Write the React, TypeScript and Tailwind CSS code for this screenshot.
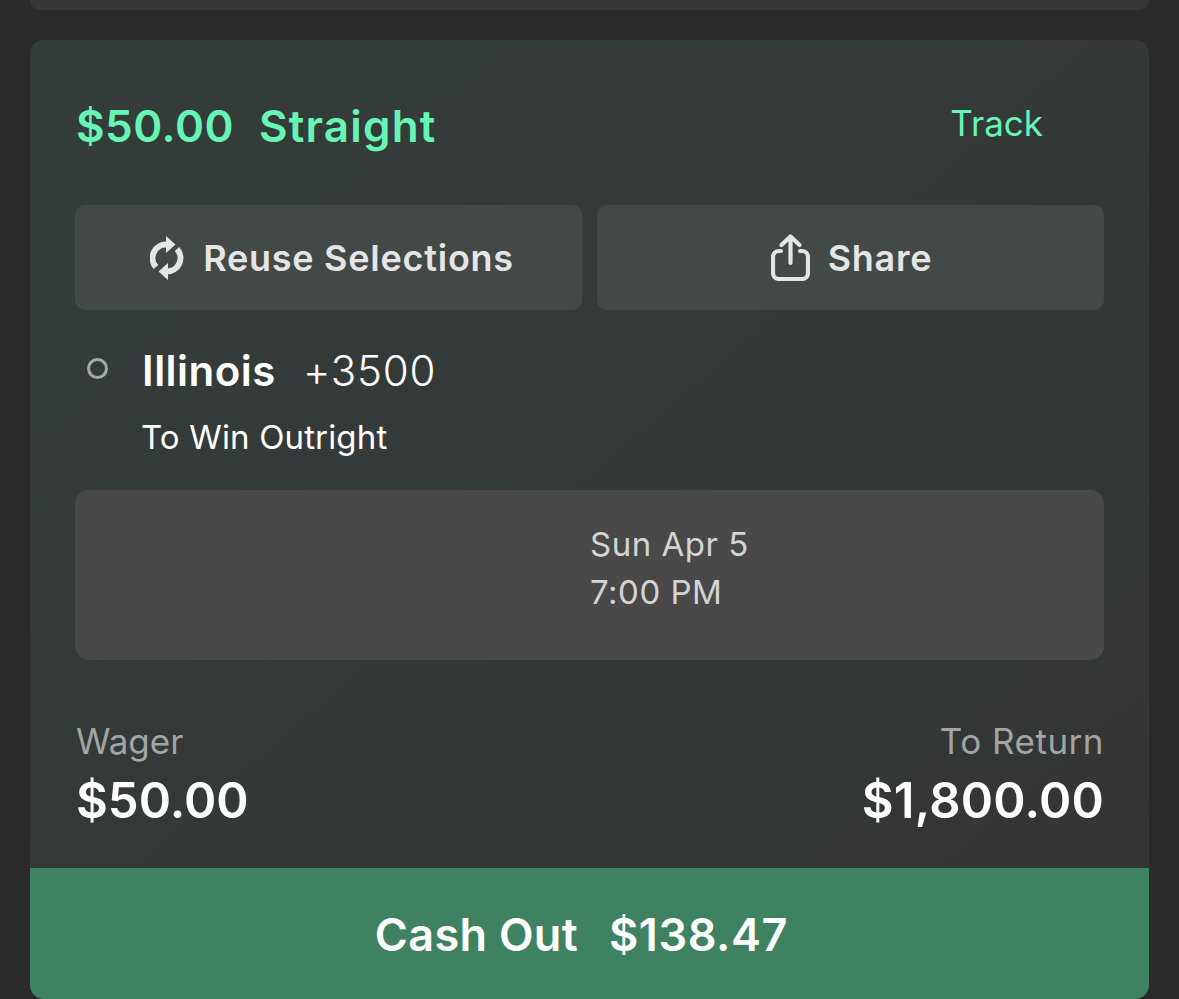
// Refresh glyph: two curved arrows chasing each other
function ReuseIcon() {
  return (
    <svg width="34" height="44" viewBox="0 0 34 44" fill="none" className="text-[#e5e5e5]">
      <path d="M6 31 A13.5 13.5 0 0 1 17 8.5" stroke="currentColor" strokeWidth="6" />
      <path d="M16 0 L25.5 8.5 L16 17 Z" fill="currentColor" />
      <path d="M27 13 A13.5 13.5 0 0 1 17 35.5" stroke="currentColor" strokeWidth="6" />
      <path d="M18 44 L8.5 35.5 L18 27 Z" fill="currentColor" />
    </svg>
  );
}

function ShareIcon() {
  return (
    <svg width="39" height="47" viewBox="0 0 39 47" fill="none" stroke="#e5e5e5" strokeWidth="4.2" strokeLinecap="round" strokeLinejoin="round">
      <path d="M10 17 H8 a6 6 0 0 0 -6 6 V39 a6 6 0 0 0 6 6 H31 a6 6 0 0 0 6 -6 V23 a6 6 0 0 0 -6 -6 H29" />
      <path d="M19.5 29 V3 M10.5 11 L19.5 2.5 L28.5 11" />
    </svg>
  );
}

export default function App() {
  return (
    <div className="h-[999px] w-[1179px] overflow-hidden bg-[#2a2a2a] px-[30px] font-['Inter',sans-serif]">
      {/* Previous card, only its bottom edge is in view */}
      <div className="h-[10px] rounded-b-[14px] bg-[#363838]" />

      <div className="mt-[30px] flex h-[959px] flex-col overflow-hidden rounded-[14px] bg-gradient-to-br from-[#343d3b] to-[#333534]">
        <div className="flex flex-1 flex-col px-[45px]">
          <div className="flex h-[165px] items-start justify-between">
            <div className="mt-[56px] flex gap-[25px] pl-[1px] text-[44px] leading-[60px] font-semibold text-[#66f5b5]">
              <span className="tracking-[0.5px]">$50.00</span>
              <span className="tracking-[1.2px]">Straight</span>
            </div>
            <a className="mt-[60px] mr-[61px] text-[35px] leading-[46px] text-[#66f5b5]">Track</a>
          </div>

          <div className="grid grid-cols-2 gap-[15px]">
            <button className="flex h-[105px] items-center justify-center gap-[19px] rounded-[10px] bg-[#434947] pl-[7px] text-[36px] tracking-[0.75px] font-semibold text-[#e5e5e5]">
              <ReuseIcon />
              <span className="mt-[1px]">Reuse Selections</span>
            </button>
            <button className="flex h-[105px] items-center justify-center gap-[18px] rounded-[10px] bg-[#434947] pl-[2px] text-[36px] tracking-[0.75px] font-semibold text-[#e5e5e5]">
              <ShareIcon />
              <span className="mt-[1px]">Share</span>
            </button>
          </div>

          <div className="mt-[34px] flex items-start">
            <div className="mt-[14px] ml-[12px] h-[21px] w-[21px] rounded-full border-[3px] border-[#a5a8a6]" />
            <div className="ml-[34px]">
              <div className="flex gap-[27px] text-[42px] leading-[54px] text-white">
                <span className="font-semibold tracking-[0.5px]">Illinois</span>
                <span className="font-light tracking-[0.8px]">+3500</span>
              </div>
              <div className="mt-[19px] -ml-[1px] text-[33px] leading-[40px] tracking-[0.15px] text-white">To Win Outright</div>
            </div>
          </div>

          <div className="mt-[33px] flex h-[170px] flex-col justify-center rounded-[14px] bg-[#494949] pb-[14px] pl-[515px] text-[33px] leading-[48px] tracking-[0.5px] text-[#d4d4d4]">
            <span>Sun Apr 5</span>
            <span>7:00 PM</span>
          </div>

          <div className="mt-[58px] flex justify-between">
            <div className="pl-[1px]">
              <div className="text-[35px] leading-[46px] text-[#a3a5a4]">Wager</div>
              <div className="mt-[4px] text-[49px] leading-[66px] font-semibold text-white">$50.00</div>
            </div>
            <div className="text-right">
              <div className="text-[35px] leading-[46px] tracking-[0.5px] text-[#a3a5a4]">To Return</div>
              <div className="mt-[4px] text-[49px] leading-[66px] tracking-[0.2px] font-semibold text-white">$1,800.00</div>
            </div>
          </div>
        </div>

        <button className="flex h-[131px] items-center justify-center gap-[31px] bg-[#3f8261] pt-[3px] pr-[16px] text-[45px] tracking-[0.3px] font-semibold text-white">
          <span>Cash Out</span>
          <span className="tracking-[0.6px]">$138.47</span>
        </button>
      </div>
    </div>
  );
}
